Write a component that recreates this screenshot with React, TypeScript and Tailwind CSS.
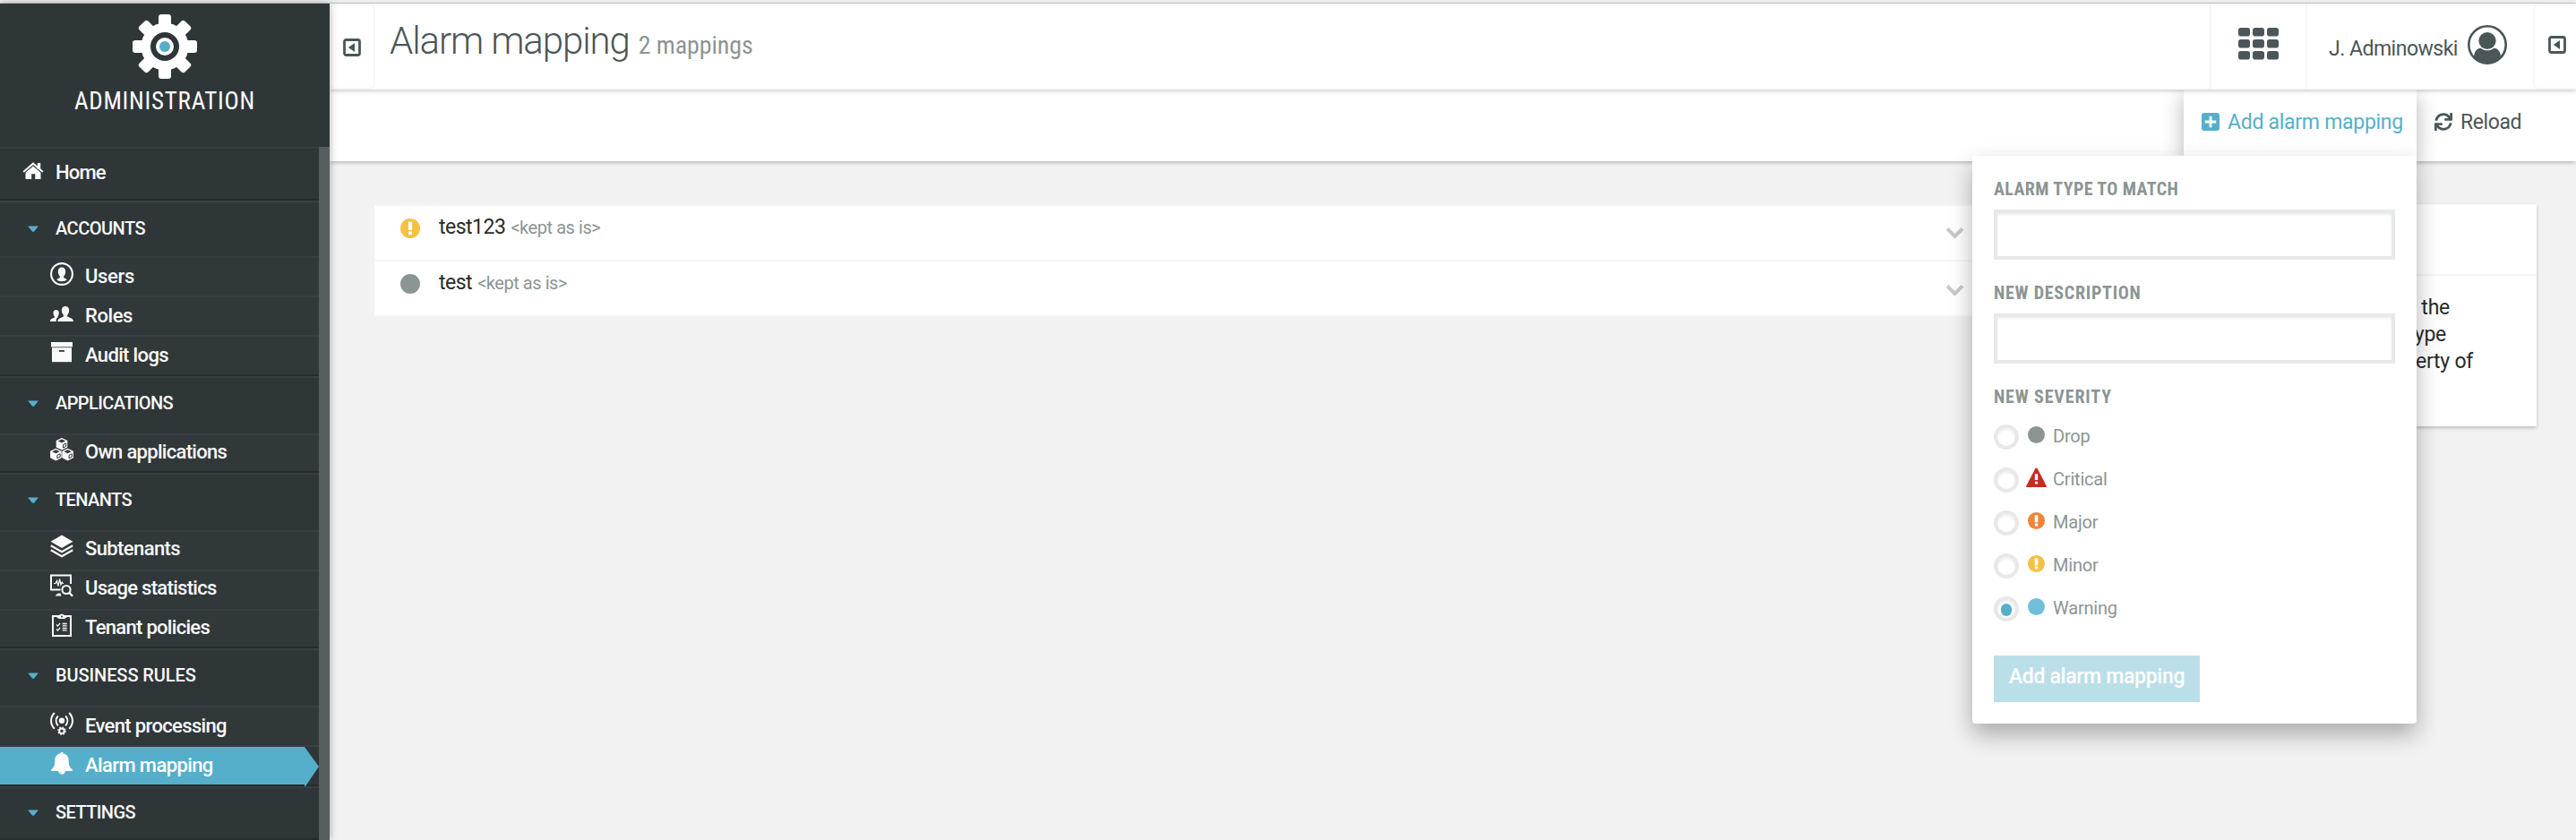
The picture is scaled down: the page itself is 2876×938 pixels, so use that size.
import type { ReactNode } from "react";
import { FaSync } from "react-icons/fa";

const iconClass = "block h-[26px] w-[26px] shrink-0";

function GearLogo() {
  return (
    <svg viewBox="-36 -36 72 72" className="h-[72px] w-[72px]">
      <g fill="#fff">
        <circle r="26.5" />
        {[0, 45, 90, 135].map((angle) => (
          <rect key={angle} x="-7" y="-36" width="14" height="72" rx="3" transform={`rotate(${angle})`} />
        ))}
      </g>
      <circle r="16" fill="#2e3638" />
      <circle r="10" fill="#fff" />
      <circle r="6" fill="#55afcb" />
    </svg>
  );
}

function HomeIcon() {
  return (
    <svg viewBox="0 0 24 20" className="h-5 w-6 shrink-0" fill="#fafafa">
      <path d="M12 4.2 20.5 11.5V19H14.2V13.3H10.2V19H3.5V11.5Z" />
      <path d="M1.2 11 12 1.8 22.8 11" fill="none" stroke="#fafafa" strokeWidth="2.2" />
      <path d="M1.6 12.6 12 3.8 22.4 12.6" fill="none" stroke="#2e3638" strokeWidth="1" />
      <rect x="16.8" y="1" width="3.4" height="7" />
    </svg>
  );
}

function UserIcon() {
  return (
    <svg viewBox="0 0 26 26" className={iconClass} fill="#fafafa">
      <circle cx="13" cy="13" r="11.9" fill="none" stroke="#fafafa" strokeWidth="2.1" />
      <path d="M13 5.6c2.7 0 4.2 1.9 4.2 4.6 0 2.3-.9 4.2-2 5.3v1.7c1.7.9 3 1.1 3.6 2.1C17.500 20.500 15.500 21.200 13 21.200s-4.500-.7-5.800-1.900c.6-1 1.900-1.200 3.600-2.100v-1.700c-1.100-1.100-2-3-2-5.300 0-2.700 1.500-4.600 4.200-4.600Z" />
    </svg>
  );
}

function RolesIcon() {
  return (
    <svg viewBox="0 0 26 26" className={iconClass} fill="#fafafa">
      <path d="M17 5c2.600 0 4.200 1.900 4.200 4.600 0 2.200-.8 4-2 5.200v1.600c2.800 1.400 6.800 1.900 6.800 5.600H8.500c0-3.700 3.700-4.200 6.400-5.600v-1.600c-1.200-1.200-2.100-3-2.100-5.200C12.800 6.900 14.400 5 17 5Z" />
      <path d="M6.700 9c2 0 3.100 1.500 3.100 3.500 0 1.700-.6 3-1.400 3.900v1.200c-1.500 1.100-1.700 2.400-1.800 4.400H0c0-3 2.700-3.300 4.900-4.400v-1.200c-.8-.9-1.400-2.200-1.400-3.900C3.500 10.500 4.700 9 6.700 9Z" />
    </svg>
  );
}

function ArchiveIcon() {
  return (
    <svg viewBox="0 0 26 26" className={iconClass}>
      <rect x="1" y="1" width="24" height="5.400" fill="#fafafa" />
      <rect x="2" y="7.200" width="22" height="16" fill="#fafafa" />
      <rect x="10" y="10" width="6" height="1.800" fill="#30383a" />
    </svg>
  );
}

function CubesIcon() {
  return (
    <svg viewBox="0 0 26 26" className={iconClass}>
      {[
        [13, 6.6],
        [6.4, 18.4],
        [19.6, 18.4],
      ].map(([x, y]) => (
        <g key={`${x}-${y}`} transform={`translate(${x} ${y})`}>
          <path d="M0-6.600 6.300-3.600V3.800L0 7-6.300 3.800V-3.600Z" fill="#fafafa" />
          <path d="M0-5.200 4.200-3.200 0-1.200-4.200-3.200Z" fill="#30383a" />
          <path d="M1.500 1 4.700-.6V2.800L1.500 4.400Z" fill="none" stroke="#30383a" strokeWidth="1" />
        </g>
      ))}
    </svg>
  );
}

function LayersIcon() {
  return (
    <svg viewBox="0 0 26 26" className={iconClass}>
      <path d="M13 .6 25.400 7.800 13 15 .6 7.800Z" fill="#fafafa" />
      <path d="M.8 12.300 13 19.300 25.200 12.300M.8 17.300 13 24.300 25.200 17.300" fill="none" stroke="#fafafa" strokeWidth="2.200" />
    </svg>
  );
}

function UsageIcon() {
  return (
    <svg viewBox="0 0 26 26" className={iconClass} fill="none" stroke="#fafafa">
      <path d="M11.500 17.500H1V1.500H23V11" strokeWidth="2" />
      <path d="M4 10.500H6L7.500 7.500 9 13.500 10.500 5.500 12 12 13.200 9 14.200 10.500H15" strokeWidth="1.200" />
      <circle cx="18" cy="17.500" r="4.600" strokeWidth="2" />
      <path d="M21.300 20.800 25 24.800" strokeWidth="2.400" />
      <path d="M6 24.500C6.500 22.500 8 22 9 21.500H11.500L12.500 24.500Z" fill="#fafafa" stroke="none" />
    </svg>
  );
}

function PoliciesIcon() {
  return (
    <svg viewBox="0 0 26 26" className={iconClass} fill="none" stroke="#fafafa">
      <path d="M3 3H23V25H3Z" strokeWidth="2" />
      <path d="M7.500 2.500H10C10.500 0 15.500 0 16 2.500H18.500V4.500L16 6H10L7.500 4.500Z" fill="#fafafa" stroke="none" />
      <circle cx="13" cy="3.400" r="1" fill="#30383a" stroke="none" />
      <path d="M7 12.500 8.500 14 11.200 10.800M7 17.500 8.500 19 11.200 15.800" strokeWidth="1.200" />
      <path d="M13.700 11.500H18.700M13.700 13.800H18.700M13.700 16.500H18.700M13.700 18.800H18.700" strokeWidth="1.300" />
    </svg>
  );
}

function EventIcon() {
  return (
    <svg viewBox="0 0 26 26" className={iconClass} fill="none" stroke="#fafafa" strokeWidth="2">
      <circle cx="13" cy="9.800" r="3.200" fill="#fafafa" stroke="none" />
      <path d="M8.800 4.500C6 7.500 6 12 8.800 15.500M17.200 4.500C20 7.500 20 12 17.200 15.500M4.800 1C-.2 6.500-.2 13.500 4.800 18.800M21.200 1C26.200 6.500 26.200 13.500 21.200 18.800" />
      <circle cx="13" cy="21.200" r="2.800" />
      <circle cx="13" cy="21.200" r="4.100" strokeWidth="1.400" strokeDasharray="1.610 1.610" />
    </svg>
  );
}

function BellIcon() {
  return (
    <svg viewBox="0 0 26 26" className={iconClass} fill="#fff">
      <path d="M11.500 2.200C11.500.2 14.500.2 14.500 2.200 18.500 3 20.600 6 20.600 9.500 20.600 15.500 22 18 24.800 20.300V22H1.200V20.300C4 18 5.400 15.500 5.400 9.500 5.400 6 7.500 3 11.500 2.200Z" />
      <path d="M9.200 22H16.800C16.500 27 9.500 27 9.200 22Z" />
      <path d="M10.700 22.800C11 24 11.800 24.600 13 24.700" fill="none" stroke="#55afcb" strokeWidth=".7" />
    </svg>
  );
}

function DrawerToggleIcon() {
  return (
    <svg viewBox="0 0 20 20" className="h-5 w-5 shrink-0">
      <rect x="1.500" y="1.500" width="17" height="17" rx="2" fill="none" stroke="#4a5658" strokeWidth="2.800" />
      <path d="M5.800 10 13 5V15Z" fill="#4a5658" />
    </svg>
  );
}

function AppGridIcon() {
  return (
    <svg viewBox="0 0 45 36" className="h-9 w-[45px]" fill="#4a5658">
      {[0, 13, 26].map((y) =>
        [0, 16, 32].map((x) => <rect key={`${x}-${y}`} x={x} y={y} width="13" height="9.600" rx="2.800" />),
      )}
    </svg>
  );
}

function AvatarIcon() {
  return (
    <svg viewBox="0 0 44 44" className="h-11 w-11 shrink-0">
      <circle cx="22" cy="22" r="20.700" fill="none" stroke="#4a5658" strokeWidth="2.600" />
      <circle cx="22" cy="17.500" r="9.600" fill="#4a5658" />
      <path d="M7 35.500C7.500 29.500 10 26.200 14.500 25.800 19 29.200 25 29.200 29.500 25.800 34 26.200 36.500 29.500 37 35.500 30 44.500 14 44.500 7 35.500Z" fill="#4a5658" />
    </svg>
  );
}

function PlusSquareIcon() {
  return (
    <svg viewBox="0 0 20 20" className="h-5 w-5 shrink-0">
      <rect width="20" height="20" rx="3" fill="#55afcb" />
      <path d="M10 3.800V16.200M3.800 10H16.200" stroke="#fff" strokeWidth="2.800" />
    </svg>
  );
}

function Chevron() {
  return (
    <svg viewBox="0 0 21 14" className="h-3.5 w-[21px]">
      <path d="M2 2.300 10.500 11 19 2.300" fill="none" stroke="#c6cacb" strokeWidth="4" />
    </svg>
  );
}

type Severity = "drop" | "critical" | "major" | "minor" | "warning";

const severityColors: Record<Severity, string> = {
  drop: "#8b9594",
  critical: "#c92a1f",
  major: "#f08536",
  minor: "#f6c142",
  warning: "#72bdda",
};

function SeverityIcon({ severity, className }: { severity: Severity; className: string }) {
  const color = severityColors[severity];
  const marked = severity === "major" || severity === "minor";
  if (severity === "critical") {
    return (
      <svg viewBox="0 0 22 22" className={className}>
        <path d="M11 .5C11.600.5 12 .9 12.300 1.400L21.700 19.500C22.200 20.500 21.800 21 21 21H1C.2 21-.2 20.500.3 19.500L9.700 1.400C10 .9 10.400.5 11 .5Z" fill={color} />
        <path d="M9.400 7H12.600V13.500H9.400ZM9.600 15H12.400V17.800H9.600Z" fill="#fff" />
      </svg>
    );
  }
  return (
    <svg viewBox="0 0 22 22" className={className}>
      <circle cx="11" cy="11" r={11} fill={color} />
      {marked && <path d="M8.900 3.700H13.100V12.900H8.900ZM9.100 14.600H12.900V18H9.100Z" fill="#fff" />}
    </svg>
  );
}

type Item = { label: string; icon: ReactNode; box: string; active?: boolean };
type Group = { label: string; head: string; caret: string; items: Item[] };

const groups: Group[] = [
  {
    label: "ACCOUNTS",
    head: "h-[62px] leading-[58px] tracking-[-0.5px]",
    caret: "mt-[26px]",
    items: [
      { label: "Users", icon: <UserIcon />, box: "h-11 pt-[5px] tracking-[-0.35px]" },
      { label: "Roles", icon: <RolesIcon />, box: "h-11 pt-[5px] tracking-[-0.4px]" },
      { label: "Audit logs", icon: <ArchiveIcon />, box: "h-11 pt-[5px] tracking-[-0.65px]" },
    ],
  },
  {
    label: "APPLICATIONS",
    head: "h-16 leading-[57px] tracking-[-0.6px]",
    caret: "mt-[25px]",
    items: [{ label: "Own applications", icon: <CubesIcon />, box: "h-[42px] pt-[3px] tracking-[-0.7px]" }],
  },
  {
    label: "TENANTS",
    head: "h-16 leading-[57px] tracking-[-0.6px]",
    caret: "mt-[25px]",
    items: [
      { label: "Subtenants", icon: <LayersIcon />, box: "h-11 pt-[3px] tracking-[-0.6px]" },
      { label: "Usage statistics", icon: <UsageIcon />, box: "h-11 pt-[3px] tracking-[-0.7px]" },
      { label: "Tenant policies", icon: <PoliciesIcon />, box: "h-[42px] pt-[3px] tracking-[-0.7px]" },
    ],
  },
  {
    label: "BUSINESS RULES",
    head: "h-16 leading-[57px] tracking-[-0.1px]",
    caret: "mt-[25px]",
    items: [
      { label: "Event processing", icon: <EventIcon />, box: "h-11 pt-[5px] tracking-[-0.65px]" },
      { label: "Alarm mapping", icon: <BellIcon />, box: "h-11 pt-[5px] tracking-[-0.6px]", active: true },
    ],
  },
  { label: "SETTINGS", head: "h-[58px] leading-[54px] tracking-[-0.6px]", caret: "mt-6", items: [] },
];

function NavItem({ item }: { item: Item }) {
  return (
    <a className={`relative flex items-start border-t-2 border-[#373f42] pl-14 ${item.box} ${item.active ? "text-white" : "bg-[#30383a]"}`}>
      {item.active && (
        <svg viewBox="0 0 356 44" className="absolute top-0 left-0 h-11 w-[356px]" fill="#55afcb">
          <path d="M0 0H340L356 22 341 44H340V42H0Z" />
        </svg>
      )}
      <span className="relative">{item.icon}</span>
      <span className="relative ml-[13px] text-[22px] leading-[31px] font-medium">{item.label}</span>
    </a>
  );
}

function Sidebar() {
  return (
    <aside className="relative z-20 flex w-[368px] shrink-0 flex-col bg-[#2e3638] text-[#fafafa] shadow-[0_0_8px_rgba(0,0,0,0.35)]">
      <div className="flex h-40 shrink-0 flex-col items-center pt-3">
        <GearLogo />
        <div className="mt-[9px] text-[27px] leading-8 tracking-[0.75px] text-white [font-stretch:75%]">ADMINISTRATION</div>
      </div>
      <div className="flex min-h-0 flex-1">
        <nav className="flex w-[356px] flex-col overflow-hidden">
          <a className="flex h-[60px] shrink-0 items-start border-t-2 border-b-2 border-t-[#373f42] border-b-[#262d2f] pl-[25px]">
            <span className="pt-[15px]">
              <HomeIcon />
            </span>
            <span className="ml-[13px] text-[22px] leading-[53px] font-medium tracking-[-0.8px]">Home</span>
          </a>
          {groups.map((group) => (
            <section key={group.label} className="shrink-0 border-b-2 border-[#262d2f]">
              <h2 className={`flex items-start border-t-2 border-[#373f42] pl-[31px] text-[20px] font-medium ${group.head}`}>
                <svg viewBox="0 0 12 8" className={`mr-[19px] h-2 w-3 ${group.caret}`} fill="#55afcb">
                  <path d="M0 .5H12L6.800 6.800H5.200Z" />
                </svg>
                {group.label}
              </h2>
              {group.items.map((item) => (
                <NavItem key={item.label} item={item} />
              ))}
            </section>
          ))}
        </nav>
        <div className="w-3 bg-[#585d60]" />
      </div>
    </aside>
  );
}

function Header() {
  return (
    <header className="relative z-10 flex h-24 shrink-0 bg-white text-[#4a5658] shadow-[0_1px_5px_rgba(0,0,0,0.25)]">
      <div className="flex w-[51px] justify-center rounded-md border-2 border-l-0 border-[#f6f6f6] pt-[37px] pl-px">
        <DrawerToggleIcon />
      </div>
      <h1 className="ml-4 flex flex-1 items-baseline text-[42px] leading-[83px] font-light tracking-[-1.1px]">
        Alarm mapping
        <small className="ml-2.5 text-[28px] font-normal tracking-[-0.1px] text-[#8b9594] [font-stretch:75%]">2 mappings</small>
      </h1>
      <div className="flex w-[108px] justify-center border-l-[3px] border-[#f6f6f6] pt-[27px]">
        <AppGridIcon />
      </div>
      <div className="flex w-[254px] justify-between border-l-2 border-[#f6f6f6] pr-[29px] pl-6 text-[23px] leading-[101px] tracking-[-0.5px]">
        <span>J. Adminowski</span>
        <span className="pt-6">
          <AvatarIcon />
        </span>
      </div>
      <div className="flex w-12 rounded-l-md border-2 border-r-0 border-[#f6f6f6] pt-[34px] pl-[15px]">
        <DrawerToggleIcon />
      </div>
    </header>
  );
}

function TextField({ label, className }: { label: string; className: string }) {
  return (
    <label className={`block text-[20px] font-bold text-[#8b9594] [font-stretch:75%] ${className}`}>
      <span className="block leading-6">{label}</span>
      <input className="mt-[11px] block h-14 w-full border-4 border-[#e6e9e8] bg-white shadow-[inset_0_2px_3px_rgba(0,0,0,0.07)] outline-none" />
    </label>
  );
}

const severities: { id: Severity; label: string }[] = [
  { id: "drop", label: "Drop" },
  { id: "critical", label: "Critical" },
  { id: "major", label: "Major" },
  { id: "minor", label: "Minor" },
  { id: "warning", label: "Warning" },
];

function AddMappingPanel() {
  return (
    <form className="absolute top-full right-0 h-[634px] w-[496px] rounded-b-sm bg-white px-6 pt-[25px] shadow-[0_12px_26px_rgba(0,0,0,0.3)]">
      <TextField label="ALARM TYPE TO MATCH" className="tracking-[0.4px]" />
      <TextField label="NEW DESCRIPTION" className="mt-[25px] tracking-[0.75px]" />
      <fieldset className="mt-[25px]">
        <legend className="block text-[20px] leading-6 font-bold tracking-[0.85px] text-[#8b9594] [font-stretch:75%]">NEW SEVERITY</legend>
        <div className="mt-[19px] flex flex-col gap-5">
          {severities.map(({ id, label }) => (
            <label key={id} className="flex h-7 items-start text-[20px] leading-[27px] tracking-[-0.2px] text-[#8b9594]">
              <span className="flex h-7 w-7 items-center justify-center rounded-full border-4 border-[#e6e9e8] shadow-[inset_0_2px_3px_rgba(0,0,0,0.07)]">
                {id === "warning" && <span className="mt-0.5 h-3.5 w-3 rounded-full bg-[#55afcb]" />}
              </span>
              <span className="ml-2 flex w-[23px] justify-center">
                <SeverityIcon severity={id} className={id === "critical" ? "h-[23px] w-[23px]" : "mt-0.5 h-[19px] w-[19px]"} />
              </span>
              <span className="ml-[7px]">{label}</span>
            </label>
          ))}
        </div>
      </fieldset>
      <button type="button" className="mt-[38px] block h-[52px] w-[230px] bg-[#bbdfe9] text-[23px] leading-[48px] font-medium tracking-[-0.3px] text-white">
        <span className="block h-[52px]">Add alarm mapping</span>
      </button>
    </form>
  );
}

function ActionBar() {
  return (
    <div className="relative z-[5] flex h-20 shrink-0 justify-end bg-white text-[23px] leading-[73px] text-[#4a5658] shadow-[0_1px_5px_rgba(0,0,0,0.3)]">
      <div className="relative flex h-[74px] w-[260px] bg-white pl-5 text-[#55afcb] shadow-[0_8px_22px_rgba(0,0,0,0.3)]">
        <span className="pt-[26px]">
          <PlusSquareIcon />
        </span>
        <span className="ml-[9px] tracking-[-0.28px] whitespace-nowrap">Add alarm mapping</span>
        <AddMappingPanel />
      </div>
      <div className="flex w-[178px] pl-5">
        <FaSync className="mt-[26px] h-5 w-5" />
        <span className="ml-[9px] tracking-[-0.4px]">Reload</span>
      </div>
    </div>
  );
}

const mappings: { name: string; severity: Severity; chevron: string }[] = [
  { name: "test123", severity: "minor", chevron: "pt-[23px]" },
  { name: "test", severity: "drop", chevron: "pt-[25px]" },
];

function MappingList() {
  return (
    <ul className="w-[1804px] self-start border-y-2 border-[#f6f6f6] bg-white">
      {mappings.map(({ name, severity, chevron }, index) => (
        <li key={name} className={`flex pr-[29px] pl-[29px] ${index > 0 ? "h-[62px] border-t-2 border-[#f6f6f6]" : "h-[60px]"}`}>
          <SeverityIcon severity={severity} className="mt-3.5 h-[22px] w-[22px]" />
          <div className="ml-[21px] flex flex-1 items-baseline text-[23px] leading-[48px] tracking-[-0.5px] text-[#2b2b2b]">
            {name}
            <span className="ml-[6px] text-[20px] tracking-[-0.45px] text-[#8b9594]">&lt;kept as is&gt;</span>
          </div>
          <span className={chevron}>
            <Chevron />
          </span>
        </li>
      ))}
    </ul>
  );
}

function InfoCard() {
  return (
    <aside className="h-[248px] w-[580px] bg-white text-right text-[23px] leading-[30px] tracking-[-0.25px] text-[#2b2b2b] shadow-[0_2px_4px_rgba(0,0,0,0.22)]">
      <div className="h-20 border-b-2 border-[#f3f3f3]" />
      <div className="pt-[21px]">
        <p className="pr-[97px]">the</p>
        <p className="pr-[101px]">type</p>
        <p className="pr-[71px]">property of</p>
      </div>
    </aside>
  );
}

export default function App() {
  return (
    <div className="flex h-[938px] w-[2876px] flex-col overflow-hidden bg-[#f2f2f2] font-['Roboto',sans-serif]">
      <div className="h-1 shrink-0 border-b border-[#cfcfcf] bg-[#f1f1f1]" />
      <div className="flex min-h-0 flex-1">
        <Sidebar />
        <div className="flex flex-1 flex-col">
          <Header />
          <ActionBar />
          <main className="flex flex-1 items-start justify-between pt-12 pr-11 pl-[50px]">
            <MappingList />
            <InfoCard />
          </main>
        </div>
      </div>
    </div>
  );
}
